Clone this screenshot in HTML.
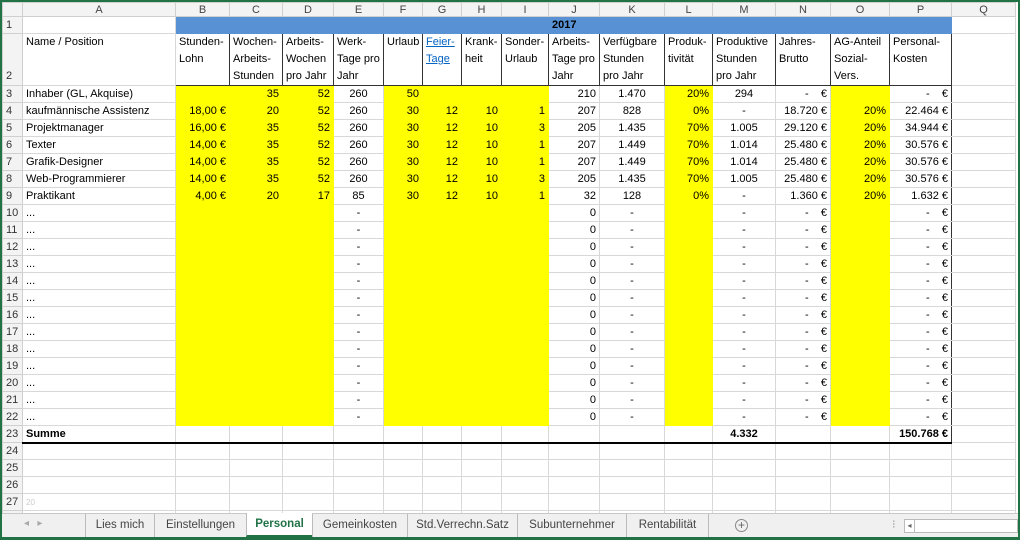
<!DOCTYPE html>
<html><head><meta charset="utf-8"><style>
*{margin:0;padding:0;box-sizing:border-box}
body{width:1020px;height:540px;background:#217346;position:relative;overflow:hidden;font-family:"Liberation Sans",sans-serif;font-size:11px;color:#000}
#sheet{position:absolute;left:2px;top:2px;width:1016px;height:511px;background:#fff;overflow:hidden}
table{border-collapse:collapse;table-layout:fixed;width:1013px}
td{border:1px solid #d8d8d8;white-space:nowrap;overflow:hidden;padding:0 3px;height:17px;line-height:15px;vertical-align:bottom}
tr.ch td{background:#f3f3f3;color:#444;text-align:center;height:14px;line-height:12px;font-size:11px;border-color:#cfcfcf}
td.rh{background:#f3f3f3;color:#333;text-align:left;padding-left:3px;border-color:#cfcfcf;font-size:11px}
.y{background:#ffff00;border-color:#ffff00}
.r{text-align:right}.c{text-align:center}
.b{font-weight:bold}
.bl{background:#5892d4;border-color:#5892d4}
tr.h2 td{height:51px;vertical-align:top;white-space:normal;line-height:17px}
tr.h2 td.k{border:1px solid #333}
tr.h2 td.rh{vertical-align:bottom}
.lb{border-left:1px solid #333!important}.rb{border-right:1px solid #333!important}
tr.s td{border-top:1px solid #333}
tr.s td.x{border-bottom:2px solid #000}
.lk{color:#0563c1;text-decoration:underline}
#tabs{position:absolute;left:2px;top:513px;width:1016px;height:24px;background:#f0f0f0;border-top:1px solid #c8c8c8;font-size:11.5px;color:#444}
.t{position:absolute;top:0;height:23px;line-height:22px;text-align:center;border-left:1px solid #bbb}
.t.a{background:#fff;color:#217346;font-weight:bold;border-bottom:2px solid #217346;height:24px;top:-1px}
</style></head><body><div id="sheet">
<table>
<colgroup><col style="width:20px"><col style="width:153px"><col style="width:54px"><col style="width:53px"><col style="width:51px"><col style="width:50px"><col style="width:39px"><col style="width:39px"><col style="width:40px"><col style="width:47px"><col style="width:51px"><col style="width:65px"><col style="width:48px"><col style="width:63px"><col style="width:55px"><col style="width:59px"><col style="width:62px"><col style="width:64px"></colgroup>
<tr class="ch"><td></td><td>A</td><td>B</td><td>C</td><td>D</td><td>E</td><td>F</td><td>G</td><td>H</td><td>I</td><td>J</td><td>K</td><td>L</td><td>M</td><td>N</td><td>O</td><td>P</td><td>Q</td></tr>
<tr><td class="rh">1</td><td></td><td class="bl" colspan="8"></td><td class="bl b" colspan="7">2017</td><td></td></tr>
<tr class="h2"><td class="rh">2</td><td>Name / Position</td><td class="k">Stunden-Lohn</td><td class="k">Wochen-Arbeits-Stunden</td><td class="k">Arbeits-Wochen pro Jahr</td><td class="k">Werk-Tage pro Jahr</td><td class="k">Urlaub</td><td class="k"><span class="lk">Feier-Tage</span></td><td class="k">Krank-heit</td><td class="k">Sonder-Urlaub</td><td class="k">Arbeits-Tage pro Jahr</td><td class="k">Verfügbare Stunden pro Jahr</td><td class="k">Produk-tivität</td><td class="k">Produktive Stunden pro Jahr</td><td class="k">Jahres-Brutto</td><td class="k">AG-Anteil Sozial-Vers.</td><td class="k">Personal-Kosten</td><td></td></tr>
<tr><td class="rh">3</td><td>Inhaber (GL, Akquise)</td><td class="y lb"></td><td class="y r">35</td><td class="y r">52</td><td class="c">260</td><td class="y r">50</td><td class="y"></td><td class="y"></td><td class="y"></td><td class="r">210</td><td class="c">1.470</td><td class="y r">20%</td><td class="c">294</td><td class="r">-&nbsp;&nbsp;&nbsp;&nbsp;€</td><td class="y"></td><td class="r rb">-&nbsp;&nbsp;&nbsp;&nbsp;€</td><td></td></tr>
<tr><td class="rh">4</td><td>kaufmännische Assistenz</td><td class="y r lb">18,00 €</td><td class="y r">20</td><td class="y r">52</td><td class="c">260</td><td class="y r">30</td><td class="y r">12</td><td class="y r">10</td><td class="y r">1</td><td class="r">207</td><td class="c">828</td><td class="y r">0%</td><td class="c">-</td><td class="r">18.720 €</td><td class="y r">20%</td><td class="r rb">22.464 €</td><td></td></tr>
<tr><td class="rh">5</td><td>Projektmanager</td><td class="y r lb">16,00 €</td><td class="y r">35</td><td class="y r">52</td><td class="c">260</td><td class="y r">30</td><td class="y r">12</td><td class="y r">10</td><td class="y r">3</td><td class="r">205</td><td class="c">1.435</td><td class="y r">70%</td><td class="c">1.005</td><td class="r">29.120 €</td><td class="y r">20%</td><td class="r rb">34.944 €</td><td></td></tr>
<tr><td class="rh">6</td><td>Texter</td><td class="y r lb">14,00 €</td><td class="y r">35</td><td class="y r">52</td><td class="c">260</td><td class="y r">30</td><td class="y r">12</td><td class="y r">10</td><td class="y r">1</td><td class="r">207</td><td class="c">1.449</td><td class="y r">70%</td><td class="c">1.014</td><td class="r">25.480 €</td><td class="y r">20%</td><td class="r rb">30.576 €</td><td></td></tr>
<tr><td class="rh">7</td><td>Grafik-Designer</td><td class="y r lb">14,00 €</td><td class="y r">35</td><td class="y r">52</td><td class="c">260</td><td class="y r">30</td><td class="y r">12</td><td class="y r">10</td><td class="y r">1</td><td class="r">207</td><td class="c">1.449</td><td class="y r">70%</td><td class="c">1.014</td><td class="r">25.480 €</td><td class="y r">20%</td><td class="r rb">30.576 €</td><td></td></tr>
<tr><td class="rh">8</td><td>Web-Programmierer</td><td class="y r lb">14,00 €</td><td class="y r">35</td><td class="y r">52</td><td class="c">260</td><td class="y r">30</td><td class="y r">12</td><td class="y r">10</td><td class="y r">3</td><td class="r">205</td><td class="c">1.435</td><td class="y r">70%</td><td class="c">1.005</td><td class="r">25.480 €</td><td class="y r">20%</td><td class="r rb">30.576 €</td><td></td></tr>
<tr><td class="rh">9</td><td>Praktikant</td><td class="y r lb">4,00 €</td><td class="y r">20</td><td class="y r">17</td><td class="c">85</td><td class="y r">30</td><td class="y r">12</td><td class="y r">10</td><td class="y r">1</td><td class="r">32</td><td class="c">128</td><td class="y r">0%</td><td class="c">-</td><td class="r">1.360 €</td><td class="y r">20%</td><td class="r rb">1.632 €</td><td></td></tr>
<tr><td class="rh">10</td><td>...</td><td class="y lb"></td><td class="y"></td><td class="y"></td><td class="c">-</td><td class="y"></td><td class="y"></td><td class="y"></td><td class="y"></td><td class="r">0</td><td class="c">-</td><td class="y"></td><td class="c">-</td><td class="r">-&nbsp;&nbsp;&nbsp;&nbsp;€</td><td class="y"></td><td class="r rb">-&nbsp;&nbsp;&nbsp;&nbsp;€</td><td></td></tr>
<tr><td class="rh">11</td><td>...</td><td class="y lb"></td><td class="y"></td><td class="y"></td><td class="c">-</td><td class="y"></td><td class="y"></td><td class="y"></td><td class="y"></td><td class="r">0</td><td class="c">-</td><td class="y"></td><td class="c">-</td><td class="r">-&nbsp;&nbsp;&nbsp;&nbsp;€</td><td class="y"></td><td class="r rb">-&nbsp;&nbsp;&nbsp;&nbsp;€</td><td></td></tr>
<tr><td class="rh">12</td><td>...</td><td class="y lb"></td><td class="y"></td><td class="y"></td><td class="c">-</td><td class="y"></td><td class="y"></td><td class="y"></td><td class="y"></td><td class="r">0</td><td class="c">-</td><td class="y"></td><td class="c">-</td><td class="r">-&nbsp;&nbsp;&nbsp;&nbsp;€</td><td class="y"></td><td class="r rb">-&nbsp;&nbsp;&nbsp;&nbsp;€</td><td></td></tr>
<tr><td class="rh">13</td><td>...</td><td class="y lb"></td><td class="y"></td><td class="y"></td><td class="c">-</td><td class="y"></td><td class="y"></td><td class="y"></td><td class="y"></td><td class="r">0</td><td class="c">-</td><td class="y"></td><td class="c">-</td><td class="r">-&nbsp;&nbsp;&nbsp;&nbsp;€</td><td class="y"></td><td class="r rb">-&nbsp;&nbsp;&nbsp;&nbsp;€</td><td></td></tr>
<tr><td class="rh">14</td><td>...</td><td class="y lb"></td><td class="y"></td><td class="y"></td><td class="c">-</td><td class="y"></td><td class="y"></td><td class="y"></td><td class="y"></td><td class="r">0</td><td class="c">-</td><td class="y"></td><td class="c">-</td><td class="r">-&nbsp;&nbsp;&nbsp;&nbsp;€</td><td class="y"></td><td class="r rb">-&nbsp;&nbsp;&nbsp;&nbsp;€</td><td></td></tr>
<tr><td class="rh">15</td><td>...</td><td class="y lb"></td><td class="y"></td><td class="y"></td><td class="c">-</td><td class="y"></td><td class="y"></td><td class="y"></td><td class="y"></td><td class="r">0</td><td class="c">-</td><td class="y"></td><td class="c">-</td><td class="r">-&nbsp;&nbsp;&nbsp;&nbsp;€</td><td class="y"></td><td class="r rb">-&nbsp;&nbsp;&nbsp;&nbsp;€</td><td></td></tr>
<tr><td class="rh">16</td><td>...</td><td class="y lb"></td><td class="y"></td><td class="y"></td><td class="c">-</td><td class="y"></td><td class="y"></td><td class="y"></td><td class="y"></td><td class="r">0</td><td class="c">-</td><td class="y"></td><td class="c">-</td><td class="r">-&nbsp;&nbsp;&nbsp;&nbsp;€</td><td class="y"></td><td class="r rb">-&nbsp;&nbsp;&nbsp;&nbsp;€</td><td></td></tr>
<tr><td class="rh">17</td><td>...</td><td class="y lb"></td><td class="y"></td><td class="y"></td><td class="c">-</td><td class="y"></td><td class="y"></td><td class="y"></td><td class="y"></td><td class="r">0</td><td class="c">-</td><td class="y"></td><td class="c">-</td><td class="r">-&nbsp;&nbsp;&nbsp;&nbsp;€</td><td class="y"></td><td class="r rb">-&nbsp;&nbsp;&nbsp;&nbsp;€</td><td></td></tr>
<tr><td class="rh">18</td><td>...</td><td class="y lb"></td><td class="y"></td><td class="y"></td><td class="c">-</td><td class="y"></td><td class="y"></td><td class="y"></td><td class="y"></td><td class="r">0</td><td class="c">-</td><td class="y"></td><td class="c">-</td><td class="r">-&nbsp;&nbsp;&nbsp;&nbsp;€</td><td class="y"></td><td class="r rb">-&nbsp;&nbsp;&nbsp;&nbsp;€</td><td></td></tr>
<tr><td class="rh">19</td><td>...</td><td class="y lb"></td><td class="y"></td><td class="y"></td><td class="c">-</td><td class="y"></td><td class="y"></td><td class="y"></td><td class="y"></td><td class="r">0</td><td class="c">-</td><td class="y"></td><td class="c">-</td><td class="r">-&nbsp;&nbsp;&nbsp;&nbsp;€</td><td class="y"></td><td class="r rb">-&nbsp;&nbsp;&nbsp;&nbsp;€</td><td></td></tr>
<tr><td class="rh">20</td><td>...</td><td class="y lb"></td><td class="y"></td><td class="y"></td><td class="c">-</td><td class="y"></td><td class="y"></td><td class="y"></td><td class="y"></td><td class="r">0</td><td class="c">-</td><td class="y"></td><td class="c">-</td><td class="r">-&nbsp;&nbsp;&nbsp;&nbsp;€</td><td class="y"></td><td class="r rb">-&nbsp;&nbsp;&nbsp;&nbsp;€</td><td></td></tr>
<tr><td class="rh">21</td><td>...</td><td class="y lb"></td><td class="y"></td><td class="y"></td><td class="c">-</td><td class="y"></td><td class="y"></td><td class="y"></td><td class="y"></td><td class="r">0</td><td class="c">-</td><td class="y"></td><td class="c">-</td><td class="r">-&nbsp;&nbsp;&nbsp;&nbsp;€</td><td class="y"></td><td class="r rb">-&nbsp;&nbsp;&nbsp;&nbsp;€</td><td></td></tr>
<tr><td class="rh">22</td><td>...</td><td class="y lb"></td><td class="y"></td><td class="y"></td><td class="c">-</td><td class="y"></td><td class="y"></td><td class="y"></td><td class="y"></td><td class="r">0</td><td class="c">-</td><td class="y"></td><td class="c">-</td><td class="r">-&nbsp;&nbsp;&nbsp;&nbsp;€</td><td class="y"></td><td class="r rb">-&nbsp;&nbsp;&nbsp;&nbsp;€</td><td></td></tr>
<tr class="s"><td class="rh">23</td><td class="x b">Summe</td><td class="x lb"></td><td class="x"></td><td class="x"></td><td class="x"></td><td class="x"></td><td class="x"></td><td class="x"></td><td class="x"></td><td class="x"></td><td class="x"></td><td class="x"></td><td class="x b c">4.332</td><td class="x"></td><td class="x"></td><td class="x b r rb">150.768 €</td><td style="border-top-color:#d8d8d8"></td></tr>
<tr><td class="rh">24</td><td></td><td></td><td></td><td></td><td></td><td></td><td></td><td></td><td></td><td></td><td></td><td></td><td></td><td></td><td></td><td></td><td></td></tr>
<tr><td class="rh">25</td><td></td><td></td><td></td><td></td><td></td><td></td><td></td><td></td><td></td><td></td><td></td><td></td><td></td><td></td><td></td><td></td><td></td></tr>
<tr><td class="rh">26</td><td></td><td></td><td></td><td></td><td></td><td></td><td></td><td></td><td></td><td></td><td></td><td></td><td></td><td></td><td></td><td></td><td></td></tr>
<tr><td class="rh">27</td><td style="color:#ccc;font-size:8px">20</td><td></td><td></td><td></td><td></td><td></td><td></td><td></td><td></td><td></td><td></td><td></td><td></td><td></td><td></td><td></td><td></td></tr>
<tr><td class="rh"></td><td></td><td></td><td></td><td></td><td></td><td></td><td></td><td></td><td></td><td></td><td></td><td></td><td></td><td></td><td></td><td></td><td></td></tr>
</table></div>
<div id="tabs">
<div style="position:absolute;left:22px;top:4px;color:#aaa;font-size:10px">◂&nbsp;&nbsp;&nbsp;▸</div>
<div class="t" style="left:83px;width:69px">Lies mich</div>
<div class="t" style="left:152px;width:92px">Einstellungen</div>
<div class="t a" style="left:244px;width:66px">Personal</div>
<div class="t" style="left:310px;width:95px">Gemeinkosten</div>
<div class="t" style="left:405px;width:110px">Std.Verrechn.Satz</div>
<div class="t" style="left:515px;width:109px">Subunternehmer</div>
<div class="t" style="left:624px;width:83px;border-right:1px solid #bbb">Rentabilität</div>
<div style="position:absolute;left:733px;top:5px;width:13px;height:13px;border:1px solid #888;border-radius:50%;text-align:center;line-height:11px;font-size:12px;color:#666">+</div>
<div style="position:absolute;left:890px;top:3px;color:#999">⁝</div>
<div style="position:absolute;left:902px;top:5px;width:114px;height:14px;border:1px solid #bbb;background:#fff"><div style="width:10px;height:12px;border-right:1px solid #bbb;font-size:8px;color:#666;line-height:12px;text-align:center">◂</div></div>
</div>
</body></html>
